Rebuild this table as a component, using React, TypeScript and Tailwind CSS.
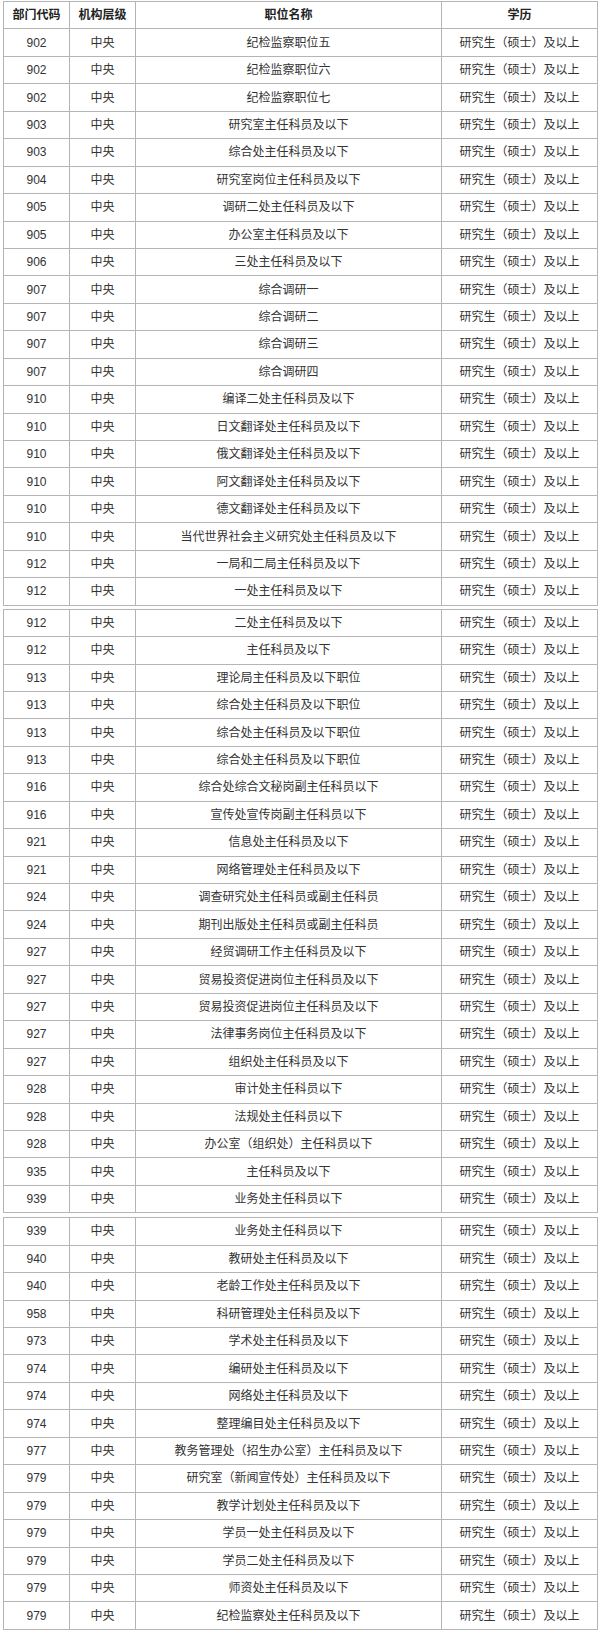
import React from 'react'

type Row = [string, string]

const seg1: Row[] = [
  ['902', '纪检监察职位五'],
  ['902', '纪检监察职位六'],
  ['902', '纪检监察职位七'],
  ['903', '研究室主任科员及以下'],
  ['903', '综合处主任科员及以下'],
  ['904', '研究室岗位主任科员及以下'],
  ['905', '调研二处主任科员及以下'],
  ['905', '办公室主任科员及以下'],
  ['906', '三处主任科员及以下'],
  ['907', '综合调研一'],
  ['907', '综合调研二'],
  ['907', '综合调研三'],
  ['907', '综合调研四'],
  ['910', '编译二处主任科员及以下'],
  ['910', '日文翻译处主任科员及以下'],
  ['910', '俄文翻译处主任科员及以下'],
  ['910', '阿文翻译处主任科员及以下'],
  ['910', '德文翻译处主任科员及以下'],
  ['910', '当代世界社会主义研究处主任科员及以下'],
  ['912', '一局和二局主任科员及以下'],
  ['912', '一处主任科员及以下'],
]

const seg2: Row[] = [
  ['912', '二处主任科员及以下'],
  ['912', '主任科员及以下'],
  ['913', '理论局主任科员及以下职位'],
  ['913', '综合处主任科员及以下职位'],
  ['913', '综合处主任科员及以下职位'],
  ['913', '综合处主任科员及以下职位'],
  ['916', '综合处综合文秘岗副主任科员以下'],
  ['916', '宣传处宣传岗副主任科员以下'],
  ['921', '信息处主任科员及以下'],
  ['921', '网络管理处主任科员及以下'],
  ['924', '调查研究处主任科员或副主任科员'],
  ['924', '期刊出版处主任科员或副主任科员'],
  ['927', '经贸调研工作主任科员及以下'],
  ['927', '贸易投资促进岗位主任科员及以下'],
  ['927', '贸易投资促进岗位主任科员及以下'],
  ['927', '法律事务岗位主任科员及以下'],
  ['927', '组织处主任科员及以下'],
  ['928', '审计处主任科员以下'],
  ['928', '法规处主任科员以下'],
  ['928', '办公室（组织处）主任科员以下'],
  ['935', '主任科员及以下'],
  ['939', '业务处主任科员以下'],
]

const seg3: Row[] = [
  ['939', '业务处主任科员以下'],
  ['940', '教研处主任科员及以下'],
  ['940', '老龄工作处主任科员及以下'],
  ['958', '科研管理处主任科员及以下'],
  ['973', '学术处主任科员及以下'],
  ['974', '编研处主任科员及以下'],
  ['974', '网络处主任科员及以下'],
  ['974', '整理编目处主任科员及以下'],
  ['977', '教务管理处（招生办公室）主任科员及以下'],
  ['979', '研究室（新闻宣传处）主任科员及以下'],
  ['979', '教学计划处主任科员及以下'],
  ['979', '学员一处主任科员及以下'],
  ['979', '学员二处主任科员及以下'],
  ['979', '师资处主任科员及以下'],
  ['979', '纪检监察处主任科员及以下'],
]

const cell = 'flex items-center justify-center border-r border-b border-[#b4b4b4] h-[27.45px]'

function TableRow({ cells, bold }: { cells: string[]; bold?: boolean }) {
  return (
    <div className={`grid grid-cols-[66px_66px_306px_156px] ${bold ? 'font-bold text-[#222]' : 'text-[#333]'}`}>
      {cells.map((c, i) => (
        <div key={i} className={cell}>{c}</div>
      ))}
    </div>
  )
}

function Segment({ rows, header }: { rows: Row[]; header?: boolean }) {
  return (
    <div className="ml-[3px] w-[595px] border-l border-t border-[#b4b4b4]">
      {header && <TableRow bold cells={['部门代码', '机构层级', '职位名称', '学历']} />}
      {rows.map((r, i) => (
        <TableRow key={i} cells={[r[0], '中央', r[1], '研究生（硕士）及以上']} />
      ))}
    </div>
  )
}

export default function App() {
  return (
    <div
      className="w-[600px] h-[1636px] bg-white pt-[1px] text-[12px] leading-none"
      style={{ fontFamily: '"Liberation Sans", "Noto Sans CJK SC", sans-serif' }}
    >
      <Segment rows={seg1} header />
      <div className="h-[3px]" />
      <Segment rows={seg2} />
      <div className="h-[4px]" />
      <Segment rows={seg3} />
    </div>
  )
}
